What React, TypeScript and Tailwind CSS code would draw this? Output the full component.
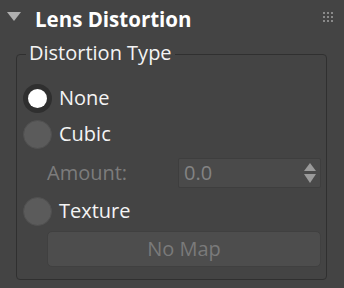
import React from 'react';

const Radio = ({ checked, label }: { checked?: boolean; label: string }) => (
  <div className="flex items-center h-[36px]">
    {checked ? (
      <span className="flex items-center justify-center w-[29px] h-[29px] rounded-full bg-[#2f2f2f]">
        <span className="w-[19px] h-[19px] rounded-full bg-white" />
      </span>
    ) : (
      <span className="w-[29px] h-[29px] rounded-full bg-[#5b5b5b] border border-[#505050]" />
    )}
    <span className="ml-[7px] text-[20px] text-[#f4f4f4]">{label}</span>
  </div>
);

export default function App() {
  return (
    <div className="w-[344px] h-[288px] overflow-hidden bg-[#444444] font-['Open_Sans',sans-serif] select-none">
      <div className="flex items-center h-[36px] pl-[7px] pr-[11px]">
        <svg width="14" height="10" viewBox="0 0 14 10" className="mt-[-2px]">
          <polygon points="0,0 14,0 7,9" fill="#b0b0b0" />
        </svg>
        <span className="ml-[14px] mt-[3px] text-[20.5px] font-bold text-white leading-none">Lens Distortion</span>
        <svg width="10" height="10" viewBox="0 0 10 10" className="ml-auto mt-[-2px]">
          {[0, 4, 8].map((y) =>
            [0, 4, 8].map((x) => <rect key={`${x}-${y}`} x={x} y={y} width="2" height="2" fill="#8a8a8a" />)
          )}
        </svg>
      </div>

      <div className="relative mt-[18px] ml-[16px] w-[311px] h-[226px] border border-[#303030] rounded-[4px]">
        <span className="absolute left-[9px] top-[-16px] px-[3px] bg-[#444444] text-[20px] text-[#f4f4f4] leading-[28px]">
          Distortion Type
        </span>
        <div className="flex flex-col pt-[25px] pl-[6px] pr-[5px]">
          <Radio checked label="None" />
          <Radio label="Cubic" />
          <div className="flex items-center h-[40px] mt-[1px]">
            <span className="ml-[24px] text-[20px] text-[#7c7c7c]">Amount:</span>
            <div className="ml-auto flex items-center w-[143px] h-[30px] bg-[#4a4a4a] border border-[#3e3e3e] rounded-[2px] pl-[5px] pr-[4px]">
              <span className="text-[20px] text-[#838383]">0.0</span>
              <svg width="12" height="21" viewBox="0 0 12 21" className="ml-auto">
                <polygon points="6,0 12,8 0,8" fill="#9a9a9a" />
                <polygon points="0,11 12,11 6,20" fill="#9a9a9a" />
              </svg>
            </div>
          </div>
          <Radio label="Texture" />
          <div className="flex items-center justify-center ml-[24px] mt-[2px] h-[36px] bg-[#4d4d4d] border border-[#404040] rounded-[5px] text-[20px] text-[#7a7a7a]">
            No Map
          </div>
        </div>
      </div>
    </div>
  );
}
